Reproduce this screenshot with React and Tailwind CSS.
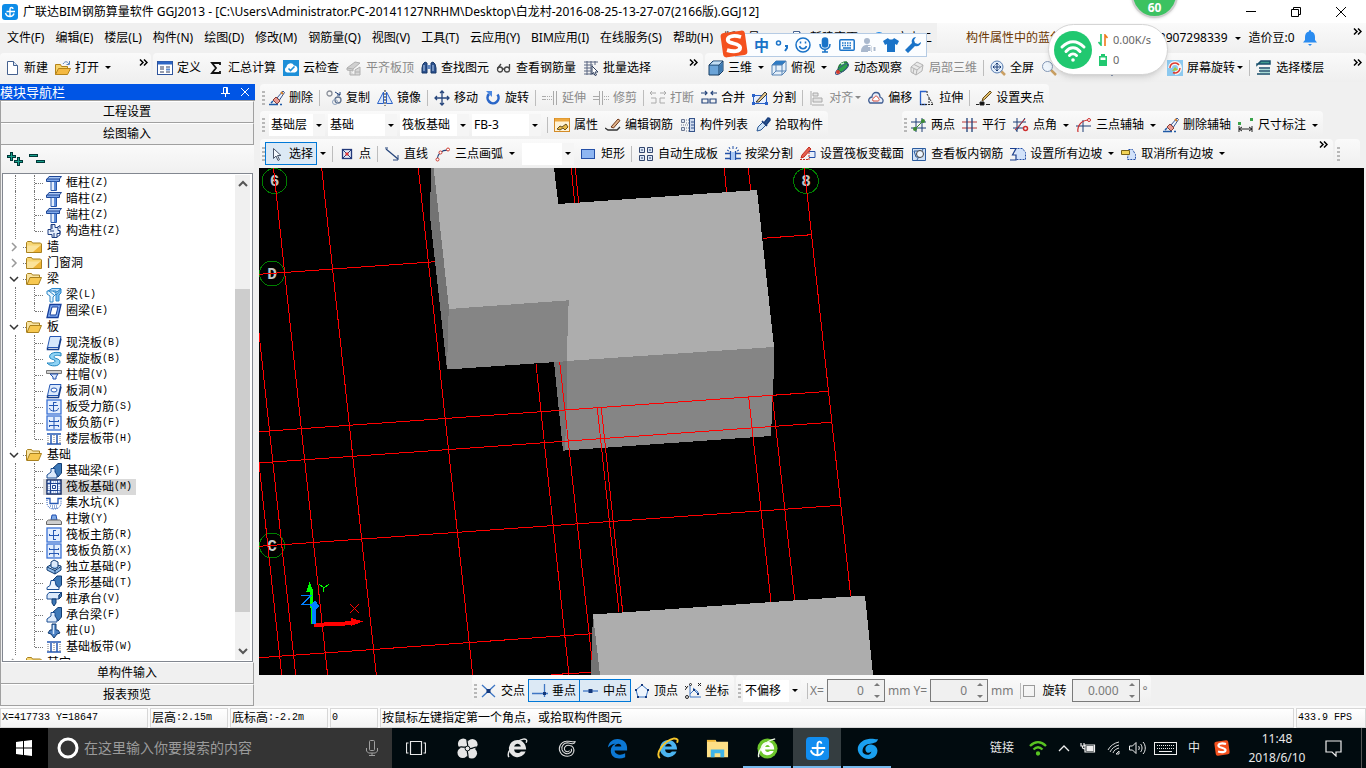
import React from "react";

const navy = "#1f3f77";
const blue = "#2b62c9";

// all toolbar and tree icons share a 16x16 box
const icons = {
  app: (
    <>
      <rect width="16" height="16" rx="3" fill="#0d8ce8" />
      <path d="M13 7.500H4.500M8 12.500V5c0-2 3-2 3 0M8 12.500c-2.500 0-4-1.500-4.500-3.500M8 12.500c2 0 3.500-1.500 4-3" stroke="#fff" strokeWidth="1.400" fill="none" />
    </>
  ),
  doc: (
    <>
      <path d="M3.500 1.500h6l4 4v9h-10z" fill="#fff" stroke="#45618f" />
      <path d="M9.500 1.500v4h4" fill="#dbe6f5" stroke="#45618f" />
    </>
  ),
  open: (
    <>
      <path d="M.5 14.500v-10h5l1 2h6v2" fill="#f6d36b" stroke="#b58318" />
      <path d="M.5 14.500l3-6h12l-3 6z" fill="#f4b942" stroke="#b58318" />
      <path d="M8 4c2-3 4-3 6 0M14.500 1v3.500h-3" fill="none" stroke="#5b82b8" />
    </>
  ),
  define: (
    <>
      <rect x=".5" y="1.500" width="15" height="13" fill="#fff" stroke="#2e549d" />
      <path d="M1 3h14" stroke="#2e66c4" strokeWidth="3" />
      <path d="M3 7h4M3 9h4M3 12h4M9 7h4M9 12h4" stroke="#2f3b5c" />
      <path d="M9 9.500h4" stroke="#5f8cd0" strokeWidth="2" />
    </>
  ),
  sum: <path d="M12 5V3H4l4 5-4 5h8v-2" fill="none" stroke="#111" strokeWidth="1.800" />,
  cloud: (
    <>
      <rect width="16" height="16" fill="#1d8fd8" />
      <path d="M4 12.500a3 3 0 0 1-.5-5.500 4 4 0 0 1 7.500-1.500 3.600 3.600 0 0 1 1 7z" fill="#fff" />
      <path d="M5.500 8.500l2 2 4-4" stroke="#1d8fd8" strokeWidth="1.600" fill="none" />
    </>
  ),
  flat: (
    <>
      <path d="M1 8l8-6 5 1-7 6zM1 8v2l6 1V9" fill="#d0d0d0" stroke="#b0b0b0" />
      <path d="M4 11v4h10V7L9 10v5M9 12h5" fill="#d8d8d8" stroke="#b0b0b0" />
    </>
  ),
  find: (
    <>
      <path d="M2 4l2-2 2 1v10H1V8zM14 4l-2-2-2 1v10h5V8z" fill="#2d528f" stroke="#173766" />
      <path d="M6 5h4v4H6z" fill="#6588bd" />
      <path d="M3 5v6M12 5v6" stroke="#bcd2ef" />
    </>
  ),
  glasses: (
    <g fill="none" stroke="#444" strokeWidth="1.300">
      <circle cx="4" cy="9.500" r="2.500" />
      <circle cx="11" cy="9.500" r="2.500" />
      <path d="M6.500 9h2M1.500 8.500L5 4M13.500 9V4" />
    </g>
  ),
  batch: (
    <>
      <path d="M1 2h14M1 5h9M1 8h7M1 11h7M1 14h10M4 1v14M8 1v14M12 1v4" stroke="#5b6781" />
      <path d="M9 6l6 6h-3l1.500 3-1.500.5-1.500-3L9 14z" fill="#fff" stroke="#31405f" />
    </>
  ),
  cube: (
    <>
      <path d="M1 5l4-4h10v10l-4 4H1z" fill="#6ba4d8" stroke="#173c63" />
      <path d="M1 5h10v10M11 5l4-4" fill="none" stroke="#173c63" />
      <path d="M2 4.500L5.500 1.500h8.500l-3 3z" fill="#c4def3" />
      <path d="M11.500 5.500l3-3v8l-3 3z" fill="#3c78b0" />
    </>
  ),
  topview: (
    <>
      <path d="M1 5l4-4h10v10l-4 4H1z" fill="#e6f0fa" stroke="#5683b4" />
      <path d="M1 5l4-4h10l-4 4z" fill="#2f7bc3" />
      <path d="M1 5h10v10M11 5l4-4M5 5v6l-4 4M5 11h10" fill="none" stroke="#5683b4" />
    </>
  ),
  orbit: (
    <>
      <path d="M4 10c0-5 4-9 9-8 2 4-1 9-6 10z" fill="#2ca34c" stroke="#14662b" />
      <ellipse cx="8" cy="9" rx="8" ry="2.500" fill="none" stroke="#3b5788" transform="rotate(-38 8 9)" />
      <circle cx="4" cy="12" r="2" fill="#d33a2d" />
      <path d="M7 4l3-1" stroke="#c9f2cf" strokeWidth="1.500" />
    </>
  ),
  local3d: (
    <g fill="#e9e9e9" stroke="#b3b3b3">
      <path d="M2 7l6-5 6 3-1 6-6 4-5-3z" />
      <path d="M2 7l6 3 6-5M8 10l-1 5M5 4.500l6 3M5 8.500l-1 5" fill="none" />
    </g>
  ),
  full: (
    <>
      <path d="M11 11l4 4" stroke="#caa063" strokeWidth="2.500" />
      <circle cx="7" cy="7" r="6" fill="#e3eefa" stroke="#5b7fb2" />
      <path d="M7 3v8M3 7h8M5.500 4.500L7 3l1.500 1.500M5.500 9.500L7 11l1.500-1.500M4.500 5.500L3 7l1.500 1.500M9.500 5.500L11 7 9.500 8.500" fill="none" stroke="#1d3f78" />
    </>
  ),
  zoom: (
    <>
      <path d="M10 10l5 5" stroke="#caa063" strokeWidth="2.500" />
      <circle cx="6.500" cy="6.500" r="5" fill="#eef5fc" stroke="#8397b5" />
    </>
  ),
  screen: (
    <>
      <rect width="16" height="16" fill="#8cc9ef" />
      <path d="M3 8a5 5 0 1 1 5 5" fill="none" stroke="#f6f6f6" strokeWidth="4" />
      <path d="M3 8a5 5 0 0 1 9-3M13 8a5 5 0 0 1-7 4.500" fill="none" stroke="#de3b2f" strokeWidth="1.500" />
      <path d="M5 11l3-4 3 3z" fill="#a2cd3a" />
    </>
  ),
  floors: (
    <>
      <path d="M1 5l4-4h9v3H1zM3 8h11M3 11h11M1 14h13" fill="#3f9a8e" stroke="#174f6b" strokeWidth="1.500" />
      <path d="M4 9.500h10M4 12.500h10" stroke="#a8dbd5" />
    </>
  ),
  erase: (
    <>
      <path d="M8 8l6-7 1.500 1.500L10.500 10z" fill="#eef3fb" stroke="#38558f" />
      <path d="M4 10l3-3 4 4-3 3z" fill="#e99b92" stroke="#8d3e35" />
      <path d="M0 14.500h9M11 14.500h2M2 13l2-2" stroke="#1f5aa6" strokeWidth="1.500" />
      <path d="M12 2l2 2" stroke="#d07d2a" strokeWidth="2" />
    </>
  ),
  copy: (
    <g fill="none">
      <circle cx="3.500" cy="3.500" r="2.500" stroke="#8a8f99" strokeWidth="1.300" />
      <circle cx="12" cy="10" r="3" stroke="#61738f" strokeWidth="1.300" />
      <circle cx="9" cy="12" r="2.500" stroke="#8fa2bd" />
      <path d="M9 2l5 3M14 2v3h-3" stroke={navy} />
    </g>
  ),
  mirror: (
    <>
      <path d="M6.500 2v11.500h-6zM9.500 2v11.500h6z" fill="#dce7f7" stroke={blue} />
      <path d="M8 0v16" stroke="#222" strokeDasharray="2 1" />
    </>
  ),
  move: <path d="M8 1v14M1 8h14M6 3l2-2 2 2M6 13l2 2 2-2M3 6L1 8l2 2M13 6l2 2-2 2" fill="none" stroke="#27467c" strokeWidth="1.300" />,
  rotate: (
    <>
      <path d="M4 4a5.500 5.500 0 1 0 8.500.5" fill="none" stroke="#2a66c8" strokeWidth="2.600" />
      <path d="M1 1h6v6z" fill="#4c88e0" />
    </>
  ),
  extend: (
    <g fill="none" stroke="#aaa">
      <path d="M0 6.500h4M0 9.500h4M11.500 1v14M14.500 1v14" />
      <path d="M5 6.500h5M5 9.500h5" strokeDasharray="1 1" />
    </g>
  ),
  trim: (
    <g fill="none" stroke="#aaa">
      <path d="M6.500 1v14M9.500 1v14M0 6.500h6M0 9.500h6" />
      <path d="M11 6.500h5M11 9.500h5" strokeDasharray="1 1" />
    </g>
  ),
  split: <path d="M1 8h5v5H1M15 8h-5v5h5M0 3h6M10 3h6M2 1L0 3l2 2M14 1l2 2-2 2" fill="none" stroke="#aaa" />,
  merge: <path d="M1 9h6v4H1zM9 9h6v4H9zM0 3h6M16 3h-6M4 1l2 2-2 2M12 1l-2 2 2 2" fill="none" stroke="#27467c" strokeWidth="1.200" />,
  cut: (
    <>
      <path d="M1.500 5.500h13v8h-13z" fill="#e6efff" stroke={blue} />
      <path d="M0 4h3v3H0zM13 12h3v3h-3zM0 12h3v3H0z" fill={blue} />
      <path d="M4 12l9-10 2 2-8 8z" fill="#e7c98b" stroke="#333" />
    </>
  ),
  align: <path d="M2 1v14M4 3h5v3H4zM4 8h9v4H4zM3 15h12" fill="#e3e3e3" stroke="#aaa" />,
  offset: (
    <>
      <path d="M2 13c-3-3 0-6 2-6 0-6 8-6 8 0 3 1 4 4 2 6z" fill="#e8eef8" stroke="#405e92" strokeWidth="1.300" />
      <path d="M5 11c-1-2 0-3 1-3 1-3 4-2 4 0 2 1 1 3 0 3z" fill="#fff" stroke="#d34a3c" />
    </>
  ),
  stretch: (
    <>
      <path d="M7.500 1.500h-6v13h6" fill="none" stroke={blue} strokeWidth="1.300" />
      <path d="M8 4l6 10.500H1M8 1v3M10 8v6" fill="none" stroke="#222" strokeDasharray="2 1" />
    </>
  ),
  grip: (
    <>
      <path d="M6 11l1-3 7-7 1.500 1.500-7 7z" fill="#dfbb67" stroke="#654c1c" />
      <path d="M4 12h4v3H4zM0 14.500h3M10 14.500h4" fill="#111" stroke="#222" />
    </>
  ),
  prop: (
    <>
      <rect x=".5" y="1.500" width="15" height="13" fill="#fff3d6" stroke="#d48b27" />
      <path d="M1 3h14" stroke="#efa83e" strokeWidth="3" />
      <path d="M3 12l3-3 2 1 4-3 2 3-3 3-2-2-3 2z" fill="#e8b947" stroke="#67501e" />
    </>
  ),
  editbar: (
    <>
      <path d="M0 11l3 2h9l3-3" fill="none" stroke="#333" strokeWidth="1.400" />
      <path d="M6 10l7-8 2 1.500L8.500 11z" fill="#e2b58a" stroke="#6d3518" />
    </>
  ),
  list: (
    <>
      <path d="M1.500 2.500h3v3h-3zM1.500 10.500h3v3h-3z" fill="#dbe6f5" stroke="#6b7690" />
      <path d="M6 3h3M6 6h3M6 11h3M6 14h3M1 8h7" stroke="#6b7690" strokeDasharray="1 1" />
      <rect x="9.500" y="1.500" width="5" height="13" fill="#cfdbee" stroke="#35538a" />
      <path d="M11 5h3M11 8h3M11 11h3" stroke="#35538a" />
    </>
  ),
  pick: (
    <>
      <path d="M2 14l1-4 5-5 3 3-5 5z" fill="#cfe4f8" stroke="#2a5793" />
      <path d="M7 4l5 5M9 6l4-5c2 0 2 2 2 2l-4 5z" stroke="#1a3f7d" strokeWidth="1.600" fill="#2a5793" />
    </>
  ),
  twopt: (
    <>
      <path d="M0 5h15M0 11h15M5 1v14M11 1v14" stroke={navy} />
      <path d="M3 13L13 3" stroke="#3c8a33" />
      <circle cx="4" cy="12" r="2" fill="#3c8a33" />
      <circle cx="12" cy="4" r="2" fill="#3c8a33" />
    </>
  ),
  parallel: (
    <>
      <path d="M0 5h15M0 11h15" stroke="#b93737" />
      <path d="M5 1v14M10 1v14" stroke={navy} strokeWidth="1.300" />
    </>
  ),
  ptangle: (
    <>
      <path d="M0 5h13M0 11h10M4 1v14M3 14L12 1" stroke={navy} />
      <circle cx="12.500" cy="11.500" r="2" fill="none" stroke="#cd2e2e" strokeWidth="1.500" />
      <path d="M2 13L12 2" stroke="#cd2e2e" />
    </>
  ),
  threept: (
    <>
      <path d="M0 9h15M7 3v12" stroke={navy} />
      <path d="M2 15C1 8 6 3 13 3" fill="none" stroke="#cd2e2e" strokeWidth="1.200" />
      <circle cx="13" cy="3" r="1.500" fill="#fff" stroke="#cd2e2e" />
    </>
  ),
  dim: (
    <>
      <path d="M1 9v6M14 9v6M1 12h13M4 10l-3 2 3 2M11 10l3 2-3 2" fill="none" stroke="#222" />
      <path d="M0 5h3v3H0zM12 1h3v3h-3z" fill="#39a34a" />
    </>
  ),
  cursor: <path d="M4.500 2.500v10l2.500-2.500 2 4.500 1.500-.8-2-4.200h3.500z" fill="#f4f8fc" stroke="#4a5568" />,
  point: (
    <>
      <rect x="3.500" y="3.500" width="9" height="9" fill="#e4ecfa" stroke="#23397a" strokeWidth="1.300" />
      <path d="M4 4l8 8M12 4l-8 8" stroke="#23397a" />
      <rect x="6.500" y="6.500" width="3" height="3" fill="#d33" />
    </>
  ),
  line: (
    <>
      <path d="M2 3l12 10" stroke="#27467c" strokeWidth="1.300" />
      <path d="M14 9v5H9M1 2h3" fill="none" stroke="#27467c" />
    </>
  ),
  arc: (
    <>
      <path d="M2 14C3 7 6 4 13 4" fill="none" stroke={navy} strokeWidth="1.300" />
      <circle cx="2.500" cy="13.500" r="1.500" fill="#fff" stroke="#cd3a2e" />
      <circle cx="5.500" cy="6.500" r="1.500" fill="#fff" stroke="#cd3a2e" />
      <circle cx="13" cy="3.500" r="1.500" fill="#fff" stroke="#cd3a2e" />
    </>
  ),
  rect: <rect x=".5" y="3.500" width="13" height="9" fill="#8eb6f2" stroke="#2450a8" />,
  auto: (
    <g fill="#dce7f7" stroke="#33466e">
      <path d="M1.500 1.500h5v5h-5zM9.500 1.500h5v5h-5zM1.500 9.500h5v5h-5zM9.500 9.500h5v5h-5z" />
      <path d="M3 4h2M11 4h2M3 12h2M11 12h2" />
    </g>
  ),
  beamcut: (
    <>
      <path d="M0 7.500h5M11 7.500h5M0 12.500h16M5.500 5v9M10.500 5v9" fill="none" stroke="#2352a8" strokeWidth="1.300" />
      <path d="M6 6h4v8H6z" fill="#a9c8f5" />
      <path d="M8 0v3M4 1l1 2M12 1l-1 2M2 4l2 1M14 4l-2 1" stroke="#2352a8" />
    </>
  ),
  section: (
    <>
      <path d="M8 5.500h7v6H9" fill="#e5eefb" stroke="#2450a8" />
      <path d="M1 12l1-3 7-8 2 2-7 8z" fill="#e5604f" stroke="#c32c20" />
      <path d="M0 13.500h9M9 6v8" fill="none" stroke="#c32c20" strokeDasharray="2 1" />
    </>
  ),
  viewbar: (
    <>
      <path d="M1.500 2.500h13v12h-13z" fill="#cfe0f5" stroke="#2c5c9e" />
      <path d="M3 5h6v6H5zM12 3L6 14" fill="none" stroke="#2c5c9e" />
      <circle cx="9" cy="8" r="3.500" fill="#eef6ff" stroke="#444" />
    </>
  ),
  slope: (
    <>
      <path d="M4.500 2.500h8l3 4v7h-9" fill="#d2e2fa" stroke="#2450a8" strokeDasharray="2 1" />
      <path d="M0 2.500h6L2.500 9H6v5H0" fill="none" stroke="#1b3f8d" strokeWidth="1.200" />
    </>
  ),
  unslope: (
    <>
      <path d="M7.500 3.500h4l3 5v5h-8z" fill="#d2e2fa" stroke="#2450a8" strokeDasharray="2 1" />
      <path d="M.5 4.500h8v4h-8z" fill="#f3d456" stroke="#7a6318" />
    </>
  ),
  cross: (
    <>
      <path d="M1 2l13 12M14 2L1 14" stroke="#3e76c4" strokeWidth="1.300" />
      <rect x="5.500" y="6" width="4" height="4" fill="#14387b" />
    </>
  ),
  perp: (
    <>
      <path d="M0 10.500h16M12.500 1v13" stroke="#3e76c4" strokeWidth="1.300" />
      <rect x="11" y="9" width="3" height="3" fill="#14387b" />
    </>
  ),
  mid: (
    <>
      <path d="M0 8h15" stroke="#3e76c4" strokeWidth="1.300" />
      <rect x="5.500" y="6" width="4" height="4" fill="#14387b" />
    </>
  ),
  vertex: (
    <>
      <path d="M8 2l6 5-2 7H4L2 7z" fill="#eef5fd" stroke="#3e76c4" />
      <path d="M7 1h2v2H7zM1 6h2v2H1zM13 6h2v2h-2zM3 13h2v2H3zM11 13h2v2h-2z" fill="#14387b" />
    </>
  ),
  coord: (
    <>
      <path d="M5 2v12h11M5 11l4-4 4 4M8 5l5 4v3" fill="none" stroke="#3e76c4" />
      <path d="M0 3l2 2M3 3L0 7M13 0l3 3M16 0l-3 3" stroke="#222" />
      <circle cx="2" cy="14" r="1.500" fill="none" stroke="#222" />
      <circle cx="5.500" cy="1.500" r="1" fill="none" stroke="#222" />
      <path d="M8 6h2v2H8zM12 10h2v2h-2z" fill="#14387b" />
    </>
  ),
  folder: (
    <>
      <path d="M.5 13.500v-10l1-1h4l1 1.500h8l1 1v8.500z" fill="#f7d673" stroke="#a9811f" />
      <path d="M1 6.500h14v6.500H1z" fill="#fbe39a" />
      <path d="M7 13l8-7v7z" fill="#eeb436" />
    </>
  ),
  folderOpen: (
    <>
      <path d="M.5 13.500v-10l1-1h4l1 1.500h7v3" fill="#f8e3a1" stroke="#a9811f" />
      <path d="M1 13.500l3-7h11.500l-3 7z" fill="#f7c850" stroke="#a9811f" />
    </>
  ),
  column: (
    <>
      <path d="M3 1.500h12.500L13 4.500H1z" fill="#a9c8f5" stroke="#1e4796" />
      <path d="M.5 4h13v2.500H.5z" fill="#7ea8ea" stroke="#1e4796" />
      <path d="M5 6.500h5.500v9H5z" fill="#e4eefc" stroke="#2758ad" />
      <path d="M9 7v8" stroke="#5d8cd8" strokeWidth="2" />
    </>
  ),
  struct: (
    <>
      <path d="M5 1.500h4v3h3v3h2v3h-3v4H6v-3H2v-5h3z" fill="#e6effc" stroke="#1c3c80" />
      <path d="M11 4.500l3-2v3M14 8v4l-3 2M6 2v4M4 8h4M8 14v-4" fill="none" stroke="#1c3c80" />
    </>
  ),
  beam: (
    <>
      <path d="M2 4l4-2.500h9L11 5z" fill="#bfe0fa" stroke="#2d87c8" />
      <path d="M1 4h9v3L7 10v5H4V9L1 7z" fill="#e8f5ff" stroke="#2d87c8" />
      <path d="M10 8l5-6v4l-2 2v6h-3zM3 4l5 4M7 4l3 2" fill="#75baf0" stroke="#2d87c8" />
    </>
  ),
  ring: (
    <>
      <path d="M4 1.500h11l-3 13H1z" fill="#7faaf0" stroke="#173f9b" strokeWidth="1.300" />
      <path d="M6 4h6l-2 8H4z" fill="#fff" stroke="#173f9b" />
    </>
  ),
  slab: (
    <>
      <path d="M4 1.500h11l-2.500 11H1.500z" fill="#d6e8fb" stroke="#2558b4" />
      <path d="M1.500 12.500v2h11l2.500-11" fill="none" stroke="#173f8b" strokeWidth="1.500" />
    </>
  ),
  spiral: <path d="M15 2C8 0 2 3 4 7c2 2 5 1 5 3s-4 2-8 2c3 4 13 4 13-1 0-4-6-3-6-5s4-2 7-1z" fill="#8fd3f5" stroke="#1f85c0" />,
  cap: (
    <>
      <path d="M.5 3.500h15v3H.5z" fill="#cfcfcf" stroke="#777" />
      <path d="M4 7h8l-2 3v2H7v-2z" fill="#dce8fb" stroke="#1f4faf" />
    </>
  ),
  hole: (
    <>
      <path d="M4 1.500h11l-2.500 11H1.500z" fill="#dbe9fc" stroke="#2558b4" />
      <path d="M1.500 12.500v2h11l2.500-11" fill="none" stroke="#173f8b" strokeWidth="1.500" />
      <ellipse cx="8" cy="7" rx="3" ry="2" fill="#fff" stroke="#2558b4" />
    </>
  ),
  rebar1: (
    <>
      <rect x="1" y="1" width="14" height="14" fill="#e3eefe" stroke="#3b72d4" strokeWidth="1.300" />
      <path d="M7.500 3v9.500M3 6.500h9M3.500 9c0 4 9 4 9 0M7.500 3.500h3" fill="none" stroke="#2558b4" />
    </>
  ),
  rebar2: (
    <>
      <rect x="1" y="1" width="14" height="14" fill="#e3eefe" stroke="#3b72d4" strokeWidth="1.300" />
      <path d="M8 2v12M3 6.500h10M3 10.500h10M3.500 5v2M12.500 5v2M3.500 10v2M12.500 10v2" fill="none" stroke="#2558b4" />
    </>
  ),
  rebar3: (
    <>
      <rect x="1" y="1" width="14" height="14" fill="#e3eefe" stroke="#3b72d4" strokeWidth="1.300" />
      <path d="M7.500 3v10M3 8.500h10M7 3.500h3M7 12.500h3M3.500 7v2M12.500 7v2" fill="none" stroke="#2558b4" />
    </>
  ),
  band: (
    <>
      <path d="M1 3h14M1 13h14" stroke="#2558b4" strokeWidth="1.500" />
      <path d="M5 4v9M11 4v9" stroke="#2558b4" strokeWidth="1.500" />
      <path d="M8 4v9M2 5v7M14 5v7" stroke="#777" strokeDasharray="1 1" />
    </>
  ),
  fbeam: (
    <>
      <path d="M7 5l5-4.500h3.500V10L12 14z" fill="#3c78b8" stroke="#123d72" />
      <path d="M1 15v-3l4-3V5.500h4V9l2 3v3z" fill="#dceafb" stroke="#1c4f93" />
    </>
  ),
  raft: (
    <>
      <rect x="1" y="1" width="14" height="14" fill="#eef5ff" stroke="#142c66" strokeWidth="1.500" />
      <path d="M4.500 1v14M11.500 1v14M1 4.500h14M1 11.500h14M6.500 6.500h3v3h-3z" fill="none" stroke="#1d4390" />
      <path d="M3 1v14M13 1v14M1 3h14M1 13h14" stroke="#7d9cd6" strokeDasharray="1 1" />
    </>
  ),
  pit: (
    <>
      <path d="M0 3.500h4v5h8v-5h4" fill="none" stroke="#2558b4" strokeWidth="1.300" />
      <path d="M1 5v4c1 3 3 5 7 5s6-2 7-5V5" fill="none" stroke="#2558b4" strokeDasharray="1 1" />
      <path d="M4 11h8M6 13h5" stroke="#2558b4" strokeDasharray="1 1" />
    </>
  ),
  pier: (
    <>
      <path d="M5 9l1-5h4l1 5z" fill="#7fa9e6" stroke="#1f4faf" />
      <path d="M.5 10.500l2-1.500h11l2 1.500v3H.5z" fill="#cfcfcf" stroke="#666" />
    </>
  ),
  isolated: (
    <>
      <path d="M1 8l5-3 9 2v4l-6 4-8-4z" fill="#8fbbe8" stroke="#123d72" />
      <path d="M5 3l3-2 4 2v5L9 10 5 8zM1 8l8 3.500 6-4M9 11v4" fill="#dceafb" stroke="#123d72" />
    </>
  ),
  strip: (
    <>
      <path d="M7 5l4-4 4.500 0v9l-3 3z" fill="#3c78b8" stroke="#123d72" />
      <path d="M1 14.500v-2l3-2 1-5h4l1 5 3 2v2z" fill="#eff6ff" stroke="#1c4f93" />
    </>
  ),
  pilecap: (
    <>
      <path d="M1 4l2-2.500h12.500L13 4v4H1z" fill="#dceafb" stroke="#1c4f93" />
      <path d="M13 4l2.500-2.500v4L13 8zM6 8h4v4l-2 3-2-3z" fill="#3c78b8" stroke="#123d72" />
    </>
  ),
  pile: (
    <>
      <path d="M6 1h4v6h2l2 3-3 1-3 4-3-4-3-1 2-3h2z" fill="#4a80c2" stroke="#123d72" />
      <path d="M7.500 2v9" stroke="#d4e6fa" strokeWidth="1.500" />
    </>
  ),
  sogou: (
    <>
      <rect x="1" y="1" width="14" height="14" rx="2" fill="#f4511e" transform="rotate(-8 8 8)" />
      <path d="M12 4C7 2.500 4 4 4.500 6s7 1.500 7 4-4 2.500-7.500 1.500" fill="none" stroke="#fff" strokeWidth="2.200" />
    </>
  ),
};

const Icon = ({ name, className = "h-4 w-4" }) => (
  <svg viewBox="0 0 16 16" className={`${className} shrink-0`} aria-hidden="true">
    {icons[name]}
  </svg>
);

const Arrow = ({ className = "" }) => (
  <svg viewBox="0 0 6 3" className={`h-[3px] w-[6px] shrink-0 fill-current ${className}`}>
    <path d="M0 0h6L3 3z" />
  </svg>
);

const Tool = ({ icon, label, arrow, disabled, active }) => (
  <button
    className={`flex shrink-0 items-center gap-1 whitespace-nowrap ${disabled ? "text-[#8a8a8a]" : ""} ${
      active ? "-mx-1 h-[23px] border border-[#0078d7] bg-[#dce9f5] px-[3px]" : ""
    }`}
  >
    <Icon name={icon} />
    <span>{label}</span>
    {arrow && <Arrow className={arrow === "tight" ? "-ml-0.5" : "ml-0.5"} />}
  </button>
);

const Sep = () => <span className="-mx-px h-4 w-px shrink-0 bg-[#bdbdbd]" />;

const Handle = () => (
  <span className="ml-0.5 mr-1 flex shrink-0 flex-col gap-0.5">
    <i className="h-0.5 w-[3px] bg-[#b8b8b8]" />
    <i className="h-0.5 w-[3px] bg-[#b8b8b8]" />
    <i className="h-0.5 w-[3px] bg-[#b8b8b8]" />
    <i className="h-0.5 w-[3px] bg-[#b8b8b8]" />
  </span>
);

const More = ({ className = "" }) => (
  <button aria-label="more" className={`self-start ${className}`}>
    <svg viewBox="0 0 9 7" className="h-[7px] w-[9px]" fill="none" stroke="#000" strokeWidth="1.500">
      <path d="M1 .5l3 3-3 3M5 .5l3 3-3 3" />
    </svg>
  </button>
);

const Group = ({ children, handle, className = "" }) => (
  <div
    className={`flex h-full items-center rounded-sm bg-gradient-to-b from-[#fafafa] to-[#efefef] ${className}`}
  >
    {handle && <Handle />}
    <div className="flex min-w-0 flex-1 items-center gap-[7px]">{children}</div>
  </div>
);

const Combo = ({ value, label, className }) => (
  <span className={`relative flex h-[22px] items-center bg-white ${className}`}>
    <select aria-label={label} className="h-full w-full appearance-none pl-0.5 outline-none">
      <option>{value}</option>
    </select>
    <span className="pointer-events-none absolute inset-y-0 right-0 flex w-3 items-center justify-center bg-[#f5f5f5]">
      <Arrow />
    </span>
  </span>
);

const menus = [
  "文件(F)",
  "编辑(E)",
  "楼层(L)",
  "构件(N)",
  "绘图(D)",
  "修改(M)",
  "钢筋量(Q)",
  "视图(V)",
  "工具(T)",
  "云应用(Y)",
  "BIM应用(I)",
  "在线服务(S)",
  "帮助(H)",
  "版本号",
];

const tree = [
  { icon: "column", name: "框柱", k: "(Z)" },
  { icon: "column", name: "暗柱", k: "(Z)" },
  { icon: "column", name: "端柱", k: "(Z)" },
  { icon: "struct", name: "构造柱", k: "(Z)", last: true },
  { name: "墙", root: true },
  { name: "门窗洞", root: true },
  { name: "梁", root: true, open: true },
  { icon: "beam", name: "梁", k: "(L)" },
  { icon: "ring", name: "圈梁", k: "(E)", last: true },
  { name: "板", root: true, open: true },
  { icon: "slab", name: "现浇板", k: "(B)" },
  { icon: "spiral", name: "螺旋板", k: "(B)" },
  { icon: "cap", name: "柱帽", k: "(V)" },
  { icon: "hole", name: "板洞", k: "(N)" },
  { icon: "rebar1", name: "板受力筋", k: "(S)" },
  { icon: "rebar2", name: "板负筋", k: "(F)" },
  { icon: "band", name: "楼层板带", k: "(H)", last: true },
  { name: "基础", root: true, open: true },
  { icon: "fbeam", name: "基础梁", k: "(F)" },
  { icon: "raft", name: "筏板基础", k: "(M)", selected: true },
  { icon: "pit", name: "集水坑", k: "(K)" },
  { icon: "pier", name: "柱墩", k: "(Y)" },
  { icon: "rebar3", name: "筏板主筋", k: "(R)" },
  { icon: "rebar2", name: "筏板负筋", k: "(X)" },
  { icon: "isolated", name: "独立基础", k: "(P)" },
  { icon: "strip", name: "条形基础", k: "(T)" },
  { icon: "pilecap", name: "桩承台", k: "(V)" },
  { icon: "fbeam", name: "承台梁", k: "(F)" },
  { icon: "pile", name: "桩", k: "(U)" },
  { icon: "band", name: "基础板带", k: "(W)", last: true },
  { name: "其它", root: true },
];

const TreeRow = ({ row }) => {
  if (row.root) {
    return (
      <li className="flex h-4 items-center pl-[5px]">
        <svg viewBox="0 0 10 10" className="h-[10px] w-[10px]" fill="none" strokeWidth="1.500">
          {row.open ? <path d="M1 3l4 4 4-4" stroke="#333" /> : <path d="M3 1l4 4-4 4" stroke="#999" />}
        </svg>
        <span className="ml-1 w-[3px] border-t border-dotted border-[#777]" />
        <Icon name={row.open ? "folderOpen" : "folder"} />
        <button className="ml-[5px] leading-4">{row.name}</button>
      </li>
    );
  }
  return (
    <li className="flex h-4 items-center pl-[11px]">
      <span className="h-full w-[19px] border-l border-dotted border-[#777]" />
      <span className={`w-px self-start border-l border-dotted border-[#777] ${row.last ? "h-1/2" : "h-full"}`} />
      <span className="w-2 border-t border-dotted border-[#777]" />
      <button className={`flex h-4 items-center gap-1 pl-[3px] pr-1 leading-4 ${row.selected ? "bg-[#d9d9d9]" : ""}`}>
        <Icon name={row.icon} />
        <span className="flex items-center">
          {row.name}
          <span className="font-['Liberation_Mono',monospace] text-[10px]">{row.k}</span>
        </span>
      </button>
    </li>
  );
};

const PanelButton = ({ children }) => (
  <button className="h-[22px] shrink-0 border-b border-r border-t border-b-[#a0a0a0] border-r-[#a0a0a0] border-t-white bg-[#f0f0f0]">
    {children}
  </button>
);

const SidePanel = () => (
  <aside className="flex w-[255px] shrink-0 flex-col">
    <header className="flex h-4 shrink-0 items-center bg-[#0055e5] leading-none text-white">
      <h2 className="flex-1 text-[13px]">模块导航栏</h2>
      <button aria-label="pin" className="mr-[11px]">
        <svg viewBox="0 0 9 10" className="h-[10px] w-[9px]" fill="none" stroke="#fff">
          <path d="M2.500 6V.5h4V6M0 6.500h9M4.500 7v3M5.500 1v5" />
        </svg>
      </button>
      <button aria-label="close" className="mr-[6px]">
        <svg viewBox="0 0 8 8" className="h-2 w-2" stroke="#fff">
          <path d="M0 0l8 8M8 0L0 8" />
        </svg>
      </button>
    </header>
    <div className="flex min-h-0 flex-1 flex-col border-l border-t border-[#a0a0a0] pr-px">
      <PanelButton>工程设置</PanelButton>
      <PanelButton>绘图输入</PanelButton>
      <div className="flex h-[28px] shrink-0 items-center gap-[6px] bg-gradient-to-b from-[#fafafa] to-[#f0f0f0] pl-[6px]">
        <button aria-label="expand all">
          <svg viewBox="0 0 16 14" className="h-[14px] w-4" stroke="#003838" strokeWidth="3">
            <path d="M4.500 0v9M0 4.500h9M11.500 5v9M7 9.500h9" />
            <path d="M4.500 1v7M1 4.500h7M11.500 6v7M8 9.500h7" stroke="#18a08c" strokeWidth="1" />
          </svg>
        </button>
        <button aria-label="collapse all">
          <svg viewBox="0 0 16 14" className="h-[14px] w-4" stroke="#003838" strokeWidth="3">
            <path d="M0 3.500h9M7 9.500h9" />
            <path d="M1 3.500h7M8 9.500h7" stroke="#18a08c" strokeWidth="1" />
          </svg>
        </button>
      </div>
      <div className="mx-px flex min-h-0 flex-1 border border-[#828790] bg-white p-px">
        <ul className="min-w-0 flex-1 overflow-hidden">
          {tree.map((row, i) => (
            <TreeRow key={i} row={row} />
          ))}
        </ul>
        <div className="mr-px flex w-[15px] flex-col items-center bg-[#f0f0f0]">
          <svg viewBox="0 0 10 10" className="my-1 h-[10px] w-[10px]" fill="none" stroke="#555" strokeWidth="2">
            <path d="M1 7l4-4 4 4" />
          </svg>
          <span className="flex-[96]" />
          <span className="w-full flex-[321] bg-[#cdcdcd]" />
          <span className="flex-[30]" />
          <svg viewBox="0 0 10 10" className="my-1 h-[10px] w-[10px]" fill="none" stroke="#555" strokeWidth="2">
            <path d="M1 3l4 4 4-4" />
          </svg>
        </div>
      </div>
      <PanelButton>单构件输入</PanelButton>
      <PanelButton>报表预览</PanelButton>
    </div>
  </aside>
);

const gridLines = [
  [273.5, 168, 327.6, 675],
  [259, 333, 295.7, 675],
  [259, 463, 281.7, 675],
  [321.7, 168, 376.3, 675],
  [418.3, 168, 472.7, 675],
  [536, 364, 569, 675],
  [559.7, 362, 592, 660],
  [571.3, 168, 574.7, 203],
  [575.3, 168, 578.7, 203],
  [597.3, 408, 619, 612],
  [601.3, 408, 622.7, 612],
  [724.3, 168, 726.5, 192],
  [748.3, 168, 750.7, 190],
  [748.6, 396, 771, 602],
  [772.3, 395, 794.7, 600],
  [804.3, 168, 850.7, 596],
  [259, 274.3, 435, 261.7],
  [763, 238.3, 811.7, 234.7],
  [259, 431.7, 828.7, 391.3],
  [259, 463, 831.3, 422.3],
  [259, 546.3, 840.3, 505.3],
  [259, 657.7, 592, 633.7],
  [551, 674.7, 591, 672.3],
];

const axisMarks = [
  [274.5, 181, "6"],
  [806, 181, "8"],
  [272, 273.5, "D"],
  [272, 545.5, "C"],
];

const Viewport = () => (
  <div className="ml-[3px] mr-0.5 min-h-0 flex-1 overflow-hidden bg-black">
    <svg
      viewBox="259 168 1105 507"
      preserveAspectRatio="xMinYMin slice"
      shapeRendering="crispEdges"
      className="block h-full w-full"
    >
      {axisMarks.map(([x, y, t]) => (
        <g key={t}>
          <circle cx={x} cy={y} r="12.500" fill="none" stroke="#008000" />
          <text
            x={x}
            y={y + 5}
            textAnchor="middle"
            fill="#c4c4c4"
            className="font-['Liberation_Mono',monospace] text-[16px] font-bold"
          >
            {t}
          </text>
        </g>
      ))}
      <path d="M431 168h3l16 141-3 60.500-17-153z" fill="#737373" />
      <path d="M433.700 168H554l4.300 36L757 190l17 157v4l-207 14L449 320v-11z" fill="#adadad" />
      <path d="M448.700 309l120-8.700-2 61-119.700 8.200z" fill="#858585" />
      <path d="M554 362.500l13-1.500v34l-2 56-2-.5z" fill="#737373" />
      <path d="M566.700 361L774 347v21l-3 68-206 14.500 2-55z" fill="#858585" />
      <path d="M593 614.500l8 60.500H591l1-35z" fill="#737373" />
      <path d="M593 614.500l272-19 8 79.500H600z" fill="#adadad" />
      {gridLines.map(([x1, y1, x2, y2], i) => (
        <line key={i} x1={x1} y1={y1} x2={x2} y2={y2} stroke="#f00" />
      ))}
      {/* ucs axes */}
      <path d="M314 625l41-2" stroke="#f00" strokeWidth="4" />
      <path d="M351 618l12 3.500-12 4.500z" fill="#f00" />
      <path d="M313 624l-2-32" stroke="#0f0" strokeWidth="3" />
      <path d="M309.500 582l4 9.500h-7z" fill="#0f0" />
      <path d="M314 624v-18" stroke="#0080ff" strokeWidth="4" />
      <path d="M315 600l4 6-4 4-5-4z" fill="#0080ff" />
      <g fill="none">
        <path d="M350 604l9 9M359 604l-9 9" stroke="#f00" />
        <path d="M319 584l5 4 5-4M323.500 588v4" stroke="#0f0" />
        <path d="M301 595.500h10l-9 9h9" stroke="#0080ff" />
      </g>
    </svg>
  </div>
);

const Spinner = ({ id, value, className }) => (
  <span className={`flex h-[23px] items-center border border-[#7a7a7a] bg-[#f0f0f0] pr-1 ${className}`}>
    <input id={id} defaultValue={value} className="w-full min-w-0 bg-transparent pr-2.5 text-right outline-none" />
    <span className="flex flex-col gap-[9px]">
      <Arrow className="rotate-180" />
      <Arrow />
    </span>
  </span>
);

const SnapBar = () => (
  <div className="flex h-[31px] shrink-0 items-center gap-0.5 pl-[216px]">
    <Group handle className="pr-[5px]">
      <Tool icon="cross" label="交点" />
      <Tool icon="perp" label="垂点" active />
      <Tool icon="mid" label="中点" active />
      <Tool icon="vertex" label="顶点" />
      <Tool icon="coord" label="坐标" />
    </Group>
    <Group handle className="pr-[3px]">
      <Combo value="不偏移" label="偏移方式" className="-ml-0.5 w-[58px]" />
      <Sep />
      <div className="-ml-1 flex items-center gap-[3px] text-[#7a7a7a]">
        <label htmlFor="dx">X=</label>
        <Spinner id="dx" value="0" className="w-[58px]" />
        <span>mm</span>
        <label htmlFor="dy">Y=</label>
        <Spinner id="dy" value="0" className="w-[58px]" />
        <span>mm</span>
      </div>
      <Sep />
      <label className="-ml-1 flex items-center gap-2">
        <input type="checkbox" className="h-3 w-3 appearance-none border border-[#9a9a9a]" />
        旋转
      </label>
      <div className="-ml-0.5 flex items-center gap-[3px] text-[#7a7a7a]">
        <Spinner id="angle" value="0.000" className="w-[68px]" />
        <label htmlFor="angle">°</label>
      </div>
    </Group>
  </div>
);

const StatusCell = ({ children, className }) => (
  <span className={`flex h-5 items-center whitespace-nowrap border border-[#d7d7d7] bg-gradient-to-b from-white to-[#f3f3f3] pl-px ${className}`}>
    {children}
  </span>
);

const Mono = ({ children }) => (
  <span className="whitespace-pre font-['Liberation_Mono',monospace] text-[10px]">{children}</span>
);

const StatusBar = () => (
  <footer className="flex h-[22px] shrink-0 items-end gap-0.5 bg-[#fafafa]">
    <StatusCell className="w-[148px]">
      <Mono>X=417733 Y=18647</Mono>
    </StatusCell>
    <StatusCell className="w-[78px]">
      层高<Mono>:2.15m</Mono>
    </StatusCell>
    <StatusCell className="w-[98px]">
      底标高<Mono>:-2.2m</Mono>
    </StatusCell>
    <StatusCell className="w-[48px]">
      <Mono>0</Mono>
    </StatusCell>
    <StatusCell className="flex-1">按鼠标左键指定第一个角点，或拾取构件图元</StatusCell>
    <StatusCell className="w-[70px]">
      <Mono>433.9 FPS</Mono>
    </StatusCell>
  </footer>
);

const apps = [
  {
    name: "fan",
    art: (
      <>
        <g fill="#e6e6e6">
          <circle cx="7.500" cy="7" r="5.500" />
          <circle cx="17" cy="7.500" r="5.500" />
          <circle cx="16.500" cy="17" r="5.500" />
          <circle cx="7" cy="16.500" r="5.500" />
        </g>
        <path d="M12 1c-2 4 1 5 0 9-3 2-6-1-9 1M23 11c-4-2-5 2-9 1M12 23c2-4-1-6 0-9" stroke="#010b0f" strokeWidth="1.300" fill="none" />
        <circle cx="12" cy="12" r="2.500" fill="#e6e6e6" stroke="#010b0f" />
      </>
    ),
  },
  {
    name: "ie-white",
    art: (
      <>
        <path fillRule="evenodd" d="M12 3a9 9 0 1 0 8.500 12h-5c-2 3-7 2-7-2H21c0-6-4-10-9-10zM8.500 10c1-4 6-4 7 0z" fill="#e6e6e6" />
        <path d="M3 21C0 16 9 4 19 2c3 0 3 2 2 4" fill="none" stroke="#e6e6e6" strokeWidth="1.500" />
      </>
    ),
  },
  {
    name: "swirl",
    art: (
      <g fill="none" stroke="#ddd" strokeWidth="1.300">
        <path d="M22 4c-3 2-6-1-11 0C4 5 1 12 4 17c4 7 14 6 16 0 1-4-1-8-5-8-4-1-7 2-6 5s5 3 6 1" />
        <path d="M22 4c-1 4-5 3-8 2-5-1-9 3-8 8 1 4 6 6 9 4 2-1 3-3 2-5" />
      </g>
    ),
  },
  {
    name: "edge",
    art: <path fillRule="evenodd" d="M2 11c1-6 5-9 10-9 6 0 10 4 10 9v3H9c0 4 6 6 11 3v4c-7 3-15 1-15-7 0-3 2-6 5-7-4 0-6 2-8 4zM9 10h7c0-4-6-4-7 0z" fill="#0c78d4" />,
  },
  {
    name: "ie",
    art: (
      <>
        <path fillRule="evenodd" d="M13 3a9 9 0 1 0 8.500 12h-5c-2 3-7 2-7-2H22c0-6-4-10-9-10zM9.500 10c1-4 6-4 7 0z" fill="#4bb4f0" />
        <path d="M4 22C-1 17 8 4 19 1.500c4 0 4 2 3 4.500" fill="none" stroke="#f6c62c" strokeWidth="2" />
      </>
    ),
  },
  {
    name: "explorer",
    art: (
      <>
        <path d="M1 3h9l1 2h12v16H1z" fill="#fddf86" />
        <path d="M1 3h9v2H1z" fill="#f0b93a" />
        <path d="M5 21v-8h14v8h-4v-4H9v4z" fill="#3fb3e8" />
      </>
    ),
  },
  {
    name: "browser",
    running: true,
    art: (
      <>
        <circle cx="12" cy="12" r="10.500" fill="#6cc62c" />
        <path fillRule="evenodd" d="M12 5a7 7 0 1 0 6.500 9.500h-4c-2 2-5 1-5-1.500H19c0-5-3-8-7-8zM9.500 10.500c1-3 4-3 5 0z" fill="#fff" />
        <path d="M3 21C1 16 9 4 20 2" fill="none" stroke="#f1f9ea" strokeWidth="1.500" />
      </>
    ),
  },
  {
    name: "ggj",
    running: true,
    active: true,
    art: (
      <>
        <rect width="24" height="24" rx="4" fill="#118df0" />
        <path d="M20 11.500H6M12 19V8c0-4 4-4 4-1M12 19c-4 0-6-2-7-5M12 19c3 0 5-2 6-4.500" stroke="#fff" strokeWidth="2" fill="none" />
      </>
    ),
  },
  {
    name: "glodon",
    running: true,
    art: <path d="M23 2c-2 1-5-1-10 0C5 3 1 9 2 14c2 9 14 12 19 5 3-5 1-10-4-11-4-1-8 2-7 6 1 3 4 3 6 1 0 4-7 5-9 1-1-5 3-9 8-9 4-1 7-1 8-5z" fill="#1aa0f0" />,
  },
];

const Taskbar = () => (
  <div className="flex h-10 shrink-0 items-stretch bg-[#010b0f] text-[#e8e8e8]">
    <button aria-label="start" className="flex w-12 items-center justify-center bg-black">
      <svg viewBox="0 0 16 16" className="h-4 w-4" fill="#fff">
        <path d="M0 2l7-1v6.500H0zM8 1l8-1v7.500H8zM0 8.500h7V15l-7-1zM8 8.500h8V16l-8-1z" />
      </svg>
    </button>
    <div className="flex w-[344px] items-center bg-[#343434] pl-[9px] pr-[14px]">
      <svg viewBox="0 0 22 22" className="h-[22px] w-[22px] shrink-0" fill="none" stroke="#fff" strokeWidth="3">
        <circle cx="11" cy="11" r="9" />
      </svg>
      <input
        aria-label="search"
        placeholder="在这里输入你要搜索的内容"
        className="ml-[5px] min-w-0 flex-1 bg-transparent text-[14px] outline-none placeholder:text-[#9b9b9b]"
      />
      <svg viewBox="0 0 12 16" className="h-4 w-3" fill="none" stroke="#a0a0a0">
        <rect x="3.500" y=".5" width="5" height="10" rx="1" />
        <path d="M.5 8v3l2 2h7l2-2V8M6 13v2.500M3 15.500h6" />
      </svg>
    </div>
    <button aria-label="task view" className="flex w-12 items-center justify-center">
      <svg viewBox="0 0 20 14" className="h-[14px] w-5" fill="none" stroke="#e8e8e8" strokeWidth="1.200">
        <path d="M4.500.5h11v13h-11zM2.500 2H.5v10h2M17.500 2h2v10h-2" />
      </svg>
    </button>
    <div className="ml-[3px] flex gap-0.5">
      {apps.map((a) => (
        <button
          key={a.name}
          aria-label={a.name}
          className={`flex w-12 items-center justify-center border-b-2 pt-0.5 ${
            a.active ? "bg-[#343d40]" : ""
          } ${a.running ? "border-[#76b9ed]" : "border-transparent"}`}
        >
          <svg viewBox="0 0 24 24" className={a.name === "swirl" ? "h-5 w-5" : "h-[23px] w-[23px]"}>
            {a.art}
          </svg>
        </button>
      ))}
    </div>
    <div className="ml-auto flex items-center">
      <span className="mr-[15px]">链接</span>
      <svg viewBox="0 0 18 16" className="mr-[11px] h-4 w-[18px]" fill="none" stroke="#58c322" strokeWidth="2.300">
        <path d="M1 6c5-5 11-5 16 0M4.500 9.500c3-3 6-3 9 0" />
        <circle cx="9" cy="13.500" r="1" fill="#58c322" />
      </svg>
      <svg viewBox="0 0 12 7" className="mr-[10px] h-[7px] w-3" fill="none" stroke="#eee" strokeWidth="1.300">
        <path d="M1 6l5-5 5 5" />
      </svg>
      <svg viewBox="0 0 16 12" className="mr-[11px] h-3 w-4" fill="none" stroke="#eee" strokeWidth="1.200">
        <path d="M5 3h9.500v7H5zM1 1v3h3V1M2.500 4v2l2 1" />
        <path d="M7 4.500h6v4H7z" fill="#eee" />
      </svg>
      <svg viewBox="0 0 14 14" className="mr-2 h-[14px] w-[14px]" fill="none" stroke="#ddd">
        <path d="M1 9c2-4 6-7 11-8M3 11c2-4 5-6 9-7M6 12c1-3 3-4 6-5M9 13l3-3v3z" />
      </svg>
      <svg viewBox="0 0 17 14" className="mr-2 h-[14px] w-[17px]" fill="none" stroke="#eee">
        <path d="M.5 5h3L7 1.500v11L3.500 9h-3zM9.500 5c1 1 1 3 0 4M11.500 3c2 2 2 6 0 8M14 1c3 3 3 9 0 12" />
      </svg>
      <svg viewBox="0 0 23 13" className="mr-[11px] h-[13px] w-[23px]" fill="none" stroke="#eee">
        <rect x=".5" y=".5" width="22" height="12" />
        <path d="M3 3.500h17M3 6.500h17" strokeDasharray="1 1" />
        <path d="M5 9.500h13" />
      </svg>
      <span className="mr-[14px]">中</span>
      <Icon name="sogou" className="mr-4 h-4 w-4" />
      <time className="w-[62px] text-center leading-[19px]">
        11:48
        <br />
        2018/6/10
      </time>
      <svg viewBox="0 0 17 17" className="ml-[17px] mr-[19px] h-[17px] w-[17px]" fill="none" stroke="#eee" strokeWidth="1.200">
        <path d="M1 1h15v11h-5v4l-4-4H1z" />
      </svg>
      <span className="mr-1 h-full w-px bg-[#555]" />
    </div>
  </div>
);

// floating sogou input bar
const ImeBar = () => (
  <div className="absolute left-[735px] top-[33px] flex h-6 w-[192px] items-center gap-[6px] border border-[#b5cbe4] bg-[#fbfdff] pl-[18px] text-[#1a73c8]">
    <Icon name="sogou" className="absolute -left-4 -top-1 h-7 w-7" />
    <span className="text-[15px] font-bold leading-none">中</span>
    <svg viewBox="0 0 14 14" className="h-[14px] w-[14px]" fill="none" stroke="currentColor" strokeWidth="1.500">
      <circle cx="3.500" cy="5" r="2" />
      <path d="M10 8h2v2l-2 3" strokeWidth="2" />
    </svg>
    <svg viewBox="0 0 16 16" className="h-4 w-4" fill="none" stroke="currentColor" strokeWidth="1.500">
      <circle cx="8" cy="8" r="7" />
      <path d="M4.500 9c1 3.500 6 3.500 7 0M5.500 4.500v2M10.500 4.500v2" />
    </svg>
    <svg viewBox="0 0 16 16" className="h-4 w-4" fill="none" stroke="currentColor" strokeWidth="1.600">
      <rect x="5.500" y="1" width="5" height="9" rx="2.500" fill="currentColor" />
      <path d="M3 7c0 7 10 7 10 0M8 12v3M5 15h6" />
    </svg>
    <svg viewBox="0 0 16 12" className="h-3 w-4" fill="none" stroke="currentColor" strokeWidth="1.500">
      <rect x=".8" y=".8" width="14.400" height="10.400" rx="1" />
      <path d="M3 4h10M3 6.500h10" strokeDasharray="1.500 1" />
      <path d="M4 9h8" />
    </svg>
    <svg viewBox="0 0 16 16" className="h-4 w-4" fill="#a9b8cd">
      <circle cx="6" cy="4" r="3" />
      <path d="M0 14c0-7 9-8 11-4v5H0z" />
      <path d="M7 9.500h3v5H7h3M12 9.500h3v5h-3z" stroke="#fff" fill="#a9b8cd" />
    </svg>
    <svg viewBox="0 0 16 14" className="h-[14px] w-4" fill="currentColor">
      <path d="M5 0c1 2 5 2 6 0l5 3-2 4-2-1v8H4V6L2 7 0 3z" />
    </svg>
    <svg viewBox="0 0 16 16" className="h-4 w-4" fill="currentColor">
      <path d="M11 0c-3 0-5 3-4 6L0 13l3 3 7-7c3 1 6-1 6-4l-3 2-3-1-1-3z" />
    </svg>
  </div>
);

const NetWidget = () => (
  <div className="absolute left-[1048px] top-6 flex h-[51px] w-[120px] items-center rounded-full border border-[#d5d5d5] bg-white pl-[5px] shadow-md">
    <svg viewBox="0 0 38 38" className="h-[38px] w-[38px]" fill="none" stroke="#fff" strokeWidth="3">
      <circle cx="19" cy="19" r="19" fill="#21c870" stroke="none" />
      <path d="M8 16c7-7 15-7 22 0M12 20.500c4-5 10-5 14 0M15.500 24.500c2-2 5-2 7 0" strokeLinecap="round" />
      <circle cx="19" cy="29" r="1.800" fill="#fff" stroke="none" />
    </svg>
    <div className="ml-[6px] grid grid-cols-[15px_auto] gap-y-[2px] leading-[18px] text-[#666]">
      <svg viewBox="0 0 10 12" className="h-3 w-[10px] self-center" fill="none" strokeWidth="1.600">
        <path d="M3 0v11L.5 8" stroke="#21c870" />
        <path d="M7 12V1l2.500 3" stroke="#ef7a1a" />
      </svg>
      <span className="text-[11px]">0.00K/s</span>
      <svg viewBox="0 0 10 12" className="h-3 w-[10px] self-center" fill="#21c870">
        <path d="M1 2h2V0h4v2h2v10H1zM2.500 3.500V6h5V3.500z" fillRule="evenodd" />
      </svg>
      <span className="text-[11px]">0</span>
    </div>
  </div>
);

export default function App() {
  return (
    <div className="relative flex h-screen flex-col overflow-hidden bg-[#f0f0f0] font-['Noto_Sans','Noto_Sans_CJK_SC',sans-serif] text-[12px] leading-4 text-black">
      <header className="flex h-[23px] shrink-0 items-center bg-white pl-0.5">
        <Icon name="app" />
        <h1 className="ml-[5px] flex-1 whitespace-nowrap">
          广联达BIM钢筋算量软件 GGJ2013 - [C:\Users\Administrator.PC-20141127NRHM\Desktop\白龙村-2016-08-25-13-27-07(2166版).GGJ12]
        </h1>
        <div className="mr-5 flex items-center gap-[35px]">
          <button aria-label="minimize" className="flex h-[10px] w-[10px] items-center">
            <span className="h-px w-full bg-black" />
          </button>
          <button aria-label="restore">
            <svg viewBox="0 0 10 10" className="h-[10px] w-[10px]" fill="none" stroke="#000">
              <path d="M.5 2.500h7v7h-7zM2.500 2.500v-2h7v7h-2" />
            </svg>
          </button>
          <button aria-label="close">
            <svg viewBox="0 0 10 10" className="h-[10px] w-[10px]" stroke="#000">
              <path d="M0 0l10 10M10 0L0 10" />
            </svg>
          </button>
        </div>
      </header>

      <nav className="flex h-[30px] shrink-0 items-center">
        <div className="flex w-[937px] shrink-0 items-center gap-[11px] overflow-hidden whitespace-nowrap pl-[7px]">
          {menus.map((m) => (
            <button key={m}>{m}</button>
          ))}
          <span className="w-2 shrink-0" />
          <Tool icon="doc" label="新建变更" />
          <span className="ml-1 h-3 w-3 shrink-0 rounded-full bg-[#1a8cf0]" />
          <button>广小二</button>
        </div>
        <div className="flex h-full flex-1 items-center bg-gradient-to-b from-[#fafafa] to-[#efefef] pl-[29px]">
          <span className="w-[186px] shrink-0 overflow-hidden whitespace-nowrap text-[#6b3600]">构件属性中的蓝色字体</span>
          <button className="flex items-center gap-[7px]">
            13907298339 <Arrow />
          </button>
          <span className="ml-2">造价豆:0</span>
          <svg viewBox="0 0 14 16" className="ml-2 h-4 w-[14px]" fill="#2b8cf0">
            <path d="M7 0c1 0 1 1 1 1.500 3 .5 4 3 4 5.500v3l2 2.500H0L2 10V7c0-2.500 1-5 4-5.500C6 1 6 0 7 0zM5 14h4l-2 2z" />
          </svg>
          <More className="ml-auto mr-[4px] mt-[5px]" />
        </div>
      </nav>

      <div className="flex h-[31px] shrink-0 items-stretch gap-0.5 pb-0.5">
        <Group className="w-[151px] pl-1">
          <Tool icon="doc" label="新建" />
          <Tool icon="open" label="打开" arrow />
          <More className="ml-auto mr-[3px] mt-[-1px]" />
        </Group>
        <Group className="w-[550px] pl-1">
          <Tool icon="define" label="定义" />
          <Tool icon="sum" label="汇总计算" />
          <Tool icon="cloud" label="云检查" />
          <Tool icon="flat" label="平齐板顶" disabled />
          <Tool icon="find" label="查找图元" />
          <Tool icon="glasses" label="查看钢筋量" />
          <Tool icon="batch" label="批量选择" />
          <More className="ml-auto mr-[5px] mt-[-1px]" />
        </Group>
        <Group className="min-w-0 flex-1 overflow-hidden pl-[3px]">
          <Tool icon="cube" label="三维" arrow />
          <Tool icon="topview" label="俯视" arrow />
          <Tool icon="orbit" label="动态观察" />
          <Tool icon="local3d" label="局部三维" disabled />
          <Sep />
          <Tool icon="full" label="全屏" />
          <Tool icon="zoom" label="缩放" arrow />
          <Tool icon="move" label="平移" />
          <span className="w-[5px]" />
          <Tool icon="screen" label="屏幕旋转" arrow="tight" />
          <Sep />
          <Tool icon="floors" label="选择楼层" />
          <More className="ml-auto mr-[4px] mt-[-1px]" />
        </Group>
      </div>

      <div className="flex min-h-0 flex-1">
        <SidePanel />
        <main className="flex min-w-0 flex-1 flex-col pl-px">
          <div className="flex h-[27px] shrink-0 items-stretch pl-[4px]">
            <Group handle className="pr-[5px]">
              <Tool icon="erase" label="删除" />
              <Sep />
              <Tool icon="copy" label="复制" />
              <Tool icon="mirror" label="镜像" />
              <Sep />
              <Tool icon="move" label="移动" />
              <Tool icon="rotate" label="旋转" />
              <Sep />
              <Tool icon="extend" label="延伸" disabled />
              <Tool icon="trim" label="修剪" disabled />
              <Sep />
              <Tool icon="split" label="打断" disabled />
              <Tool icon="merge" label="合并" />
              <Tool icon="cut" label="分割" />
              <Sep />
              <Tool icon="align" label="对齐" arrow="tight" disabled />
              <Tool icon="offset" label="偏移" />
              <Tool icon="stretch" label="拉伸" />
              <Sep />
              <Tool icon="grip" label="设置夹点" />
            </Group>
          </div>
          <div className="flex h-7 shrink-0 items-stretch justify-between pl-[4px] pr-[43px]">
            <Group handle className="pr-[5px]">
              <div className="flex gap-[3px]">
                <Combo value="基础层" label="楼层" className="w-14" />
                <Combo value="基础" label="类别" className="w-[69px]" />
                <Combo value="筏板基础" label="构件类型" className="w-[69px]" />
                <Combo value="FB-3" label="构件" className="w-[69px]" />
              </div>
              <Sep />
              <Tool icon="prop" label="属性" />
              <Tool icon="editbar" label="编辑钢筋" />
              <Tool icon="list" label="构件列表" />
              <Tool icon="pick" label="拾取构件" />
            </Group>
            <Group handle className="pr-[5px]">
              <Tool icon="twopt" label="两点" />
              <Tool icon="parallel" label="平行" />
              <Tool icon="ptangle" label="点角" arrow />
              <Tool icon="threept" label="三点辅轴" arrow />
              <Tool icon="erase" label="删除辅轴" />
              <Tool icon="dim" label="尺寸标注" arrow />
            </Group>
          </div>
          <div className="flex h-[29px] shrink-0 items-stretch gap-0.5 pl-[4px]">
            <Group handle className="min-w-0 flex-1">
              <Tool icon="cursor" label="选择" active />
              <Arrow />
              <Sep />
              <Tool icon="point" label="点" />
              <Sep />
              <Tool icon="line" label="直线" />
              <Tool icon="arc" label="三点画弧" arrow />
              <Combo value="" label="画法" className="w-[52px]" />
              <Tool icon="rect" label="矩形" />
              <Sep />
              <Tool icon="auto" label="自动生成板" />
              <Tool icon="beamcut" label="按梁分割" />
              <Tool icon="section" label="设置筏板变截面" />
              <Tool icon="viewbar" label="查看板内钢筋" />
              <Tool icon="slope" label="设置所有边坡" arrow />
              <Tool icon="unslope" label="取消所有边坡" arrow />
              <More className="ml-auto mr-[5px] mt-[-1px]" />
            </Group>
            <Group handle className="mr-[6px] w-[25px]" />
          </div>
          <Viewport />
          <SnapBar />
        </main>
      </div>

      <StatusBar />
      <Taskbar />

      <ImeBar />
      <NetWidget />
      <span className="absolute left-[1131px] top-[-29px] flex h-[47px] w-[47px] items-end justify-center rounded-full border-2 border-[#cfcfcf] bg-[#3cc261] pb-[2px] text-[12px] font-bold leading-3 text-white shadow">
        60
      </span>
    </div>
  );
}
